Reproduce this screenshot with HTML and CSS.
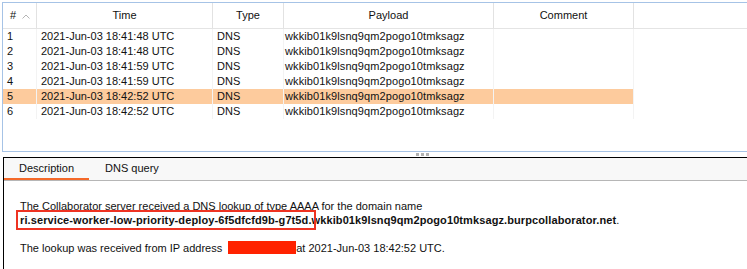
FILE: index.html
```html
<!DOCTYPE html>
<html lang="en">
<head>
  <meta charset="UTF-8">
  <title>Collaborator interactions</title>
  <link rel="stylesheet" href="styles.css">
</head>
<body>
  <!-- Tabel interaksi -->
  <div class="results">
    <div class="row head">
      <div class="cell num">#
        <svg class="sort" width="8" height="5" viewBox="0 0 8 5"><path d="M0.5 4.5 L4 1 L7.5 4.5" fill="none" stroke="#b4b4b4" stroke-width="1"/></svg>
      </div>
      <div class="cell">Time</div>
      <div class="cell">Type</div>
      <div class="cell">Payload</div>
      <div class="cell">Comment</div>
    </div>
    <div class="row">
      <div class="cell num">1</div><div class="cell">2021-Jun-03 18:41:48 UTC</div><div class="cell">DNS</div><div class="cell pay">wkkib01k9lsnq9qm2pogo10tmksagz</div><div class="cell"></div>
    </div>
    <div class="row">
      <div class="cell num">2</div><div class="cell">2021-Jun-03 18:41:48 UTC</div><div class="cell">DNS</div><div class="cell pay">wkkib01k9lsnq9qm2pogo10tmksagz</div><div class="cell"></div>
    </div>
    <div class="row">
      <div class="cell num">3</div><div class="cell">2021-Jun-03 18:41:59 UTC</div><div class="cell">DNS</div><div class="cell pay">wkkib01k9lsnq9qm2pogo10tmksagz</div><div class="cell"></div>
    </div>
    <div class="row">
      <div class="cell num">4</div><div class="cell">2021-Jun-03 18:41:59 UTC</div><div class="cell">DNS</div><div class="cell pay">wkkib01k9lsnq9qm2pogo10tmksagz</div><div class="cell"></div>
    </div>
    <div class="row selected">
      <div class="cell num">5</div><div class="cell">2021-Jun-03 18:42:52 UTC</div><div class="cell">DNS</div><div class="cell pay">wkkib01k9lsnq9qm2pogo10tmksagz</div><div class="cell"></div>
    </div>
    <div class="row">
      <div class="cell num">6</div><div class="cell">2021-Jun-03 18:42:52 UTC</div><div class="cell">DNS</div><div class="cell pay">wkkib01k9lsnq9qm2pogo10tmksagz</div><div class="cell"></div>
    </div>
  </div>

  <!-- Pembatas panel -->
  <div class="splitter"><span></span><span></span><span></span></div>

  <!-- Panel detail -->
  <div class="detail">
    <div class="tabs">
      <div class="tab active">Description</div>
      <div class="tab">DNS query</div>
    </div>
    <div class="desc">
      <p>The Collaborator server received a DNS lookup of type AAAA for the domain name<br>
        <b><span class="mark">ri.service-worker-low-priority-deploy-6f5dfcfd9b-g7t5d.</span>wkkib01k9lsnq9qm2pogo10tmksagz.burpcollaborator.net</b>.</p>
      <p>The lookup was received from IP address <span class="redact"></span>at 2021-Jun-03 18:42:52 UTC.</p>
    </div>
  </div>
</body>
</html>
```

FILE: styles.css
```css
* {
  margin: 0;
  padding: 0;
  box-sizing: border-box;
}
body {
  font-family: "Liberation Sans", Arial, sans-serif;
  font-size: 11px;
  color: #111;
  background: #fff;
  width: 747px;
  height: 269px;
  overflow: hidden;
}

/* Tabel */
.results {
  margin: 2px 0 0 2px;
  height: 150px;
  border: 1px solid #a6c3e6;
  border-right: none;
}
.row {
  display: grid;
  grid-template-columns: 34px 176px 71px 210px 140px;
  height: 15px;
  line-height: 15px;
}
.row .cell {
  border-right: 1px solid #f3f3f3;
  padding-left: 4px;
  white-space: nowrap;
  overflow: hidden;
}
.row .cell.pay {
  padding-left: 1px;
  letter-spacing: 0.1px;
}
.row.selected {
  background: linear-gradient(#fdcb9d, #fdcb9d) no-repeat 0 0 / 631px 100%;
}
.row.head {
  height: 26px;
  line-height: 25px;
  border-bottom: 1px solid #e4e4e4;
}
.row.head .cell {
  text-align: center;
  padding: 0;
  border-right: 1px solid #e2e2e2;
}
.row.head .cell.num {
  text-align: left;
  padding-left: 7px;
}
.sort {
  margin-left: 3px;
  vertical-align: 0;
}

/* Pembatas */
.splitter {
  height: 5px;
  display: flex;
  align-items: center;
  gap: 2px;
  padding-left: 416px;
}
.splitter span {
  width: 3px;
  height: 3px;
  background: #b2b2b2;
}

/* Panel detail */
.detail {
  margin-left: 3px;
  border-top: 1px solid #000;
  border-left: 1px solid #000;
  height: 120px;
}
.tabs {
  display: flex;
  height: 23px;
  background: #f8f8f8;
  border-bottom: 1px solid #b6b6b6;
}
.tab {
  line-height: 20px;
  padding: 0 15px;
  color: #111;
}
.tab.active {
  width: 85px;
  border-bottom: 2px solid #f4692a;
}
.tab + .tab {
  padding-left: 16px;
}
.desc {
  padding: 18px 0 0 16px;
  line-height: 14px;
}
.desc p {
  margin-bottom: 14px;
}
.desc b {
  letter-spacing: 0.1px;
}
.mark {
  outline: 2px solid #ee3322;
  outline-offset: 2px;
}
.redact {
  display: inline-block;
  width: 68px;
  height: 13px;
  margin-left: 3px;
  background: #ff2200;
  vertical-align: -2px;
}
```
